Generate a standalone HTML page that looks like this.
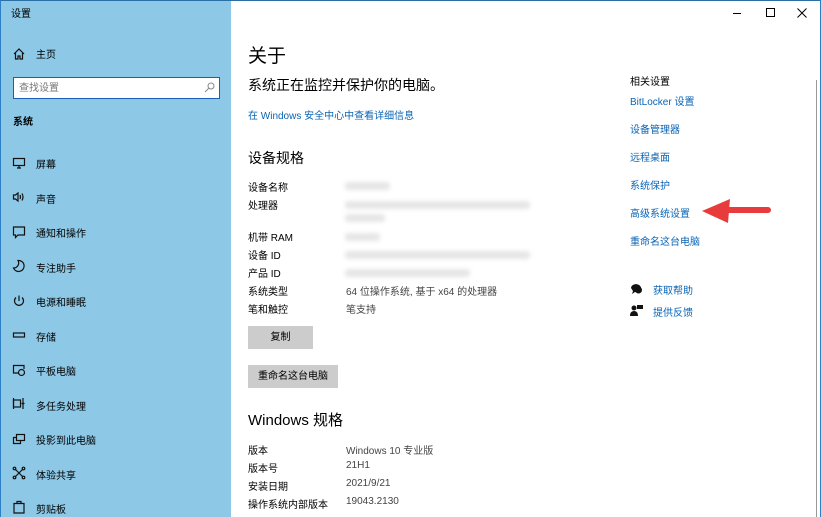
<!DOCTYPE html>
<html><head><meta charset="utf-8"><style>
*{margin:0;padding:0;box-sizing:border-box}
body{width:821px;height:517px;overflow:hidden;background:#fff;font-family:"Liberation Sans","Noto Sans CJK SC",sans-serif;position:relative;color:#000}
.a{position:absolute;white-space:nowrap}
#side{position:absolute;left:0;top:0;width:231px;height:517px;background:#8dc8e6;border-left:1px solid #2b7fc7;border-top:1px solid #2b6fa7}
.s,.nav{margin-top:-3px}
.g,.v,.lk{margin-top:-1px}
.s{font-size:10px}
.nav{position:absolute;left:35px;font-size:10px;color:#000}
.ic{position:absolute;left:11px;width:14px;height:14px}
.ic path,.ic rect,.ic circle{fill:none;stroke:#111;stroke-width:1.2}
.lk{color:#0a64b4;font-size:10px}
.g{font-size:10px;color:#000}
.v{font-size:10px;color:#444}
.blur{position:absolute;height:8px;background:#e6e6e6;filter:blur(2px);border-radius:3px}
.btn{position:absolute;background:#ccc;font-size:10px;text-align:center}
</style></head><body>
<div id="side">
<div class="a s" style="left:10px;top:7px">设置</div>
<svg class="ic" style="top:46px" viewBox="0 0 14 14"><path d="M2 7 L7 2 L12 7 M3.5 5.5 V12 H6 V9 H8 V12 H10.5 V5.5"/></svg>
<div class="nav" style="top:48px">主页</div>
<div class="a" style="left:12px;top:76px;width:207px;height:22px;background:#fff;border:1px solid #1a5fb4"></div>
<div class="a" style="left:18px;top:78px;font-size:10px;color:#777">查找设置</div>
<svg class="a" style="left:203px;top:81px" width="11" height="11"><circle cx="7" cy="4" r="3" fill="none" stroke="#888"/><path d="M5 6 L1 10" stroke="#888"/></svg>
<div class="a" style="left:12px;top:112px;font-size:10px;font-weight:bold">系统</div>
<svg class="ic" style="top:155px" viewBox="0 0 14 14"><rect x="1.5" y="2.5" width="11" height="7"/><path d="M5 12 H9 M7 9.5 V12"/></svg><div class="nav" style="top:158px">屏幕</div>
<svg class="ic" style="top:189px" viewBox="0 0 14 14"><path d="M1.5 5 H3.5 L6 3 V11 L3.5 9 H1.5 Z M8 5 Q9 7 8 9 M10 3.5 Q12 7 10 10.5"/></svg><div class="nav" style="top:193px">声音</div>
<svg class="ic" style="top:224px" viewBox="0 0 14 14"><path d="M1.5 2 H12.5 V10 H6 L3.5 12.5 V10 H1.5 Z"/></svg><div class="nav" style="top:227px">通知和操作</div>
<svg class="ic" style="top:258px" viewBox="0 0 14 14"><path d="M6 1.5 A5.5 5.5 0 1 1 1.5 9 A5 5 0 0 0 6 1.5 Z"/></svg><div class="nav" style="top:262px">专注助手</div>
<svg class="ic" style="top:293px" viewBox="0 0 14 14"><path d="M4 3.5 A4.5 4.5 0 1 0 10 3.5 M7 1.5 V7"/></svg><div class="nav" style="top:296px">电源和睡眠</div>
<svg class="ic" style="top:327px" viewBox="0 0 14 14"><rect x="1.5" y="5" width="11" height="4"/></svg><div class="nav" style="top:331px">存储</div>
<svg class="ic" style="top:362px" viewBox="0 0 14 14"><path d="M7 10 H1.5 V2.5 H12 V6"/><circle cx="9.5" cy="9.5" r="3"/></svg><div class="nav" style="top:365px">平板电脑</div>
<svg class="ic" style="top:396px" viewBox="0 0 14 14"><rect x="1.5" y="3" width="7" height="7"/><path d="M1.5 1 V12 M11 1 V12 M9.5 6.5 H12.5"/></svg><div class="nav" style="top:400px">多任务处理</div>
<svg class="ic" style="top:431px" viewBox="0 0 14 14"><rect x="4.5" y="2.5" width="8" height="6"/><path d="M4.5 5.5 H1.5 V11.5 H8.5 V8.5"/></svg><div class="nav" style="top:434px">投影到此电脑</div>
<svg class="ic" style="top:465px" viewBox="0 0 14 14"><path d="M3 3 L11 11 M11 3 L3 11"/><circle cx="2.5" cy="2.5" r="1.3"/><circle cx="11.5" cy="2.5" r="1.3"/><circle cx="2.5" cy="11.5" r="1.3"/><circle cx="11.5" cy="11.5" r="1.3"/></svg><div class="nav" style="top:469px">体验共享</div>
<svg class="ic" style="top:499px" viewBox="0 0 14 14"><path d="M2 3.5 H12 V13 H2 Z M5 3.5 V1.5 H9 V3.5"/></svg><div class="nav" style="top:503px">剪贴板</div>
</div>
<div class="a" style="left:231px;top:0;width:590px;height:1px;background:#2b6fa7"></div>
<div class="a" style="left:820px;top:0;width:1px;height:517px;background:#2b7fc7"></div>
<div class="a" style="left:816px;top:80px;width:1px;height:437px;background:#999"></div>
<div class="a" style="left:733px;top:13px;width:8px;height:1px;background:#000"></div>
<div class="a" style="left:766px;top:8px;width:9px;height:9px;border:1px solid #000"></div>
<svg class="a" style="left:797px;top:8px" width="10" height="10"><path d="M0.5 0.5 L9.5 9.5 M9.5 0.5 L0.5 9.5" stroke="#000"/></svg>

<div class="a" style="left:248px;top:41px;font-size:19px">关于</div>
<div class="a" style="left:248px;top:75px;font-size:14px">系统正在监控并保护你的电脑。</div>
<div class="a lk" style="left:248px;top:108px">在 Windows 安全中心中查看详细信息</div>
<div class="a" style="left:248px;top:148px;font-size:14px">设备规格</div>

<div class="a g" style="left:248px;top:180px">设备名称</div><div class="blur" style="left:345px;top:182px;width:45px"></div>
<div class="a g" style="left:248px;top:198px">处理器</div><div class="blur" style="left:345px;top:201px;width:185px"></div><div class="blur" style="left:345px;top:214px;width:40px"></div>
<div class="a g" style="left:248px;top:230px">机带 RAM</div><div class="blur" style="left:345px;top:233px;width:35px"></div>
<div class="a g" style="left:248px;top:248px">设备 ID</div><div class="blur" style="left:345px;top:251px;width:185px"></div>
<div class="a g" style="left:248px;top:266px">产品 ID</div><div class="blur" style="left:345px;top:269px;width:125px"></div>
<div class="a g" style="left:248px;top:284px">系统类型</div><div class="a v" style="left:346px;top:284px">64 位操作系统, 基于 x64 的处理器</div>
<div class="a g" style="left:248px;top:302px">笔和触控</div><div class="a v" style="left:346px;top:302px">笔支持</div>
<div class="btn" style="left:248px;top:326px;width:65px;height:23px;line-height:23px">复制</div>
<div class="btn" style="left:248px;top:365px;width:90px;height:23px;line-height:23px">重命名这台电脑</div>

<div class="a" style="left:248px;top:409px;font-size:15px">Windows 规格</div>
<div class="a g" style="left:248px;top:443px">版本</div><div class="a v" style="left:346px;top:443px">Windows 10 专业版</div>
<div class="a g" style="left:248px;top:461px">版本号</div><div class="a v" style="left:346px;top:461px">21H1</div>
<div class="a g" style="left:248px;top:479px">安装日期</div><div class="a v" style="left:346px;top:479px">2021/9/21</div>
<div class="a g" style="left:248px;top:497px">操作系统内部版本</div><div class="a v" style="left:346px;top:497px">19043.2130</div>

<div class="a g" style="left:630px;top:74px">相关设置</div>
<div class="a lk" style="left:630px;top:94px">BitLocker 设置</div>
<div class="a lk" style="left:630px;top:122px">设备管理器</div>
<div class="a lk" style="left:630px;top:150px">远程桌面</div>
<div class="a lk" style="left:630px;top:178px">系统保护</div>
<div class="a lk" style="left:630px;top:206px">高级系统设置</div>
<div class="a lk" style="left:630px;top:234px">重命名这台电脑</div>
<svg class="a" style="left:698px;top:196px" width="76" height="32"><path d="M70 14 L30 14" stroke="#e83c3c" stroke-width="6" stroke-linecap="round"/><path d="M4 15 L32 3 L30 27 Z" fill="#e83c3c"/></svg>
<svg class="a" style="left:630px;top:282px" width="13" height="13"><path d="M1 6 A5 4 0 1 1 5 10 L2 12 L3 9 Z" fill="#111"/><circle cx="8.5" cy="8" r="3.5" fill="#111"/></svg>
<div class="a lk" style="left:653px;top:283px">获取帮助</div>
<svg class="a" style="left:630px;top:304px" width="13" height="13"><circle cx="4" cy="4" r="2.5" fill="#111"/><path d="M0 12 Q0 7 4 7 Q8 7 8 12 Z" fill="#111"/><rect x="7" y="1" width="6" height="4" fill="#111"/></svg>
<div class="a lk" style="left:653px;top:305px">提供反馈</div>
</body></html>
